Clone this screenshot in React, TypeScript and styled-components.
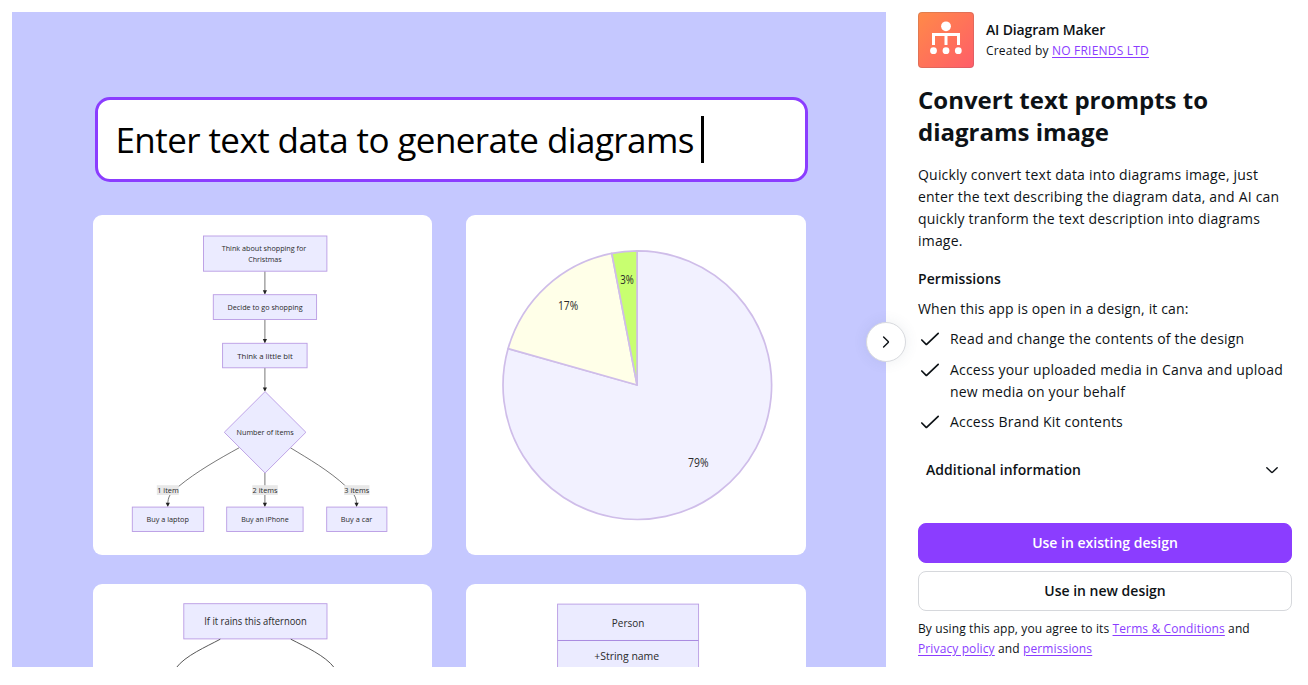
import React from "react";
import styled, { createGlobalStyle } from "styled-components";

const GlobalStyle = createGlobalStyle`
  *, *::before, *::after { box-sizing: border-box; }
  body {
    margin: 0;
    background: #fff;
    color: #0d1216;
    font-family: "Open Sans", "Noto Sans", sans-serif;
    -webkit-font-smoothing: antialiased;
  }
  h1, h2, p, ul { margin: 0; padding: 0; font-weight: inherit; }
`;

const Page = styled.main`
  display: flex;
  gap: 32px;
  height: 685px;
  padding: 12px 16px 18px 12px;
  overflow: hidden;
`;

const Preview = styled.section`
  position: relative;
  flex: 0 0 874px;
  min-width: 0;
  height: 655px;
  background: #c5c8ff;
`;

const Artwork = styled.div`
  height: 100%;
  padding: 85px 0 0 80.7px;
  overflow: hidden;
`;

const Prompt = styled.div`
  display: flex;
  align-items: center;
  height: 85px;
  width: 713px;
  margin-left: 2.3px;
  padding-left: 17.5px;
  border: 3px solid #8b3dff;
  border-radius: 15px;
  background: #fff;
  color: #000;
  font-size: 35px;
  letter-spacing: -0.58px;
  line-height: 48px;
  white-space: nowrap;
`;

const Caret = styled.span`
  width: 3px;
  height: 47px;
  margin-left: 7px;
  background: #000;
`;

const Gallery = styled.div`
  display: grid;
  grid-template-columns: repeat(2, 339.7px);
  grid-auto-rows: 339.7px;
  gap: 29.3px 33.8px;
  margin-top: 33.3px;
`;

const Card = styled.div`
  border-radius: 9px;
  background: #fff;
  overflow: hidden;

  svg { display: block; width: 100%; height: 100%; }
`;

const NextButton = styled.button`
  position: absolute;
  top: 310px;
  right: -20px;
  display: grid;
  place-items: center;
  width: 40px;
  height: 40px;
  padding: 0;
  border: 1px solid #d8dade;
  border-radius: 50%;
  background: #fff;
  box-shadow: 0 0 14px rgba(64, 87, 109, 0.1);
`;

const Details = styled.aside`
  display: flex;
  flex: none;
  flex-direction: column;
  width: 374px;
  height: 647px;
`;

const AppHeader = styled.header`
  display: flex;
  align-items: center;
  gap: 12px;
  height: 56px;
`;

const AppIcon = styled.div`
  width: 56px;
  height: 56px;
  border-radius: 4px;
  border: 1px solid rgba(57, 76, 96, 0.15);
  background: linear-gradient(135deg, #ff8a48, #ff5d69) border-box;

  svg { display: block; width: 54px; height: 54px; }
`;

const AppName = styled.p`
  margin-top: -1px;
  padding-bottom: 1px;
  font-size: 14px;
  font-weight: 600;
  line-height: 22px;
  letter-spacing: -0.15px;
`;

const Small = styled.p<{ $lead: number; $tracking: number }>`
  font-size: 12px;
  line-height: ${(p) => p.$lead}px;
  letter-spacing: ${(p) => p.$tracking}px;
`;

const Link = styled.a`
  color: #8b3dff;
  text-decoration: underline;
  text-underline-offset: 2px;
`;

const Title = styled.h1`
  margin-top: 16px;
  font-size: 24px;
  font-weight: 700;
  line-height: 32px;
`;

const Body = styled.p`
  font-size: 14px;
  line-height: 22px;
  letter-spacing: 0.2px;
`;

const Description = styled(Body)`
  margin-top: 16px;
`;

const Intro = styled(Body)`
  letter-spacing: 0.14px;
`;

const Subheading = styled.h2`
  margin: 16px 0 8px;
  font-size: 14px;
  font-weight: 600;
  line-height: 22px;
  letter-spacing: 0.1px;
`;

const PermissionList = styled.ul`
  display: flex;
  flex-direction: column;
  gap: 8.5px;
  margin-top: 8px;
  list-style: none;
`;

const Permission = styled.li`
  display: flex;
  gap: 8px;

  svg { flex: none; width: 24px; height: 24px; margin: -1px 0; }
`;

const Accordion = styled.button`
  display: flex;
  align-items: center;
  justify-content: space-between;
  height: 40px;
  margin-top: 17px;
  padding: 0 12px 0 8px;
  border: 0;
  background: none;
  color: inherit;
  font: 600 14px/22px "Open Sans", sans-serif;
  letter-spacing: 0.05px;
`;

const Footer = styled.footer`
  display: flex;
  flex-direction: column;
  gap: 8px;
  margin-top: auto;
`;

const ActionButton = styled.button<{ $primary?: boolean }>`
  height: 40px;
  border: 1px solid ${(p) => (p.$primary ? "#8b3dff" : "#d6d8dc")};
  border-radius: 8px;
  background: ${(p) => (p.$primary ? "#8b3dff" : "#fff")};
  color: ${(p) => (p.$primary ? "#fff" : "#0d1216")};
  font: 600 14px/22px "Open Sans", sans-serif;
  letter-spacing: 0;
`;

const Check = () => (
  <svg viewBox="0 0 24 24" fill="none" stroke="#0d1216" strokeWidth="1.7" strokeLinecap="round" strokeLinejoin="round">
    <path d="m3.800 13 4.100 4.100c.3.300.7.300 1 0L20.200 6.300" />
  </svg>
);

type LabelProps = { x: number; y: number; w: number; size?: number; children: string };

const Label = ({ x, y, w, size = 7.9, children }: LabelProps) => (
  <text x={x - w / 2} y={y} textLength={w} lengthAdjust="spacingAndGlyphs" fontSize={size} fill="#2a2a2a">
    {children}
  </text>
);

type NodeProps = { x: number; y: number; w: number; h: number };

const Node = (p: NodeProps) => (
  <rect x={p.x} y={p.y} width={p.w} height={p.h} fill="#ebebff" stroke="#b99be4" strokeWidth="0.9" />
);

const Arrow = ({ x, y }: { x: number; y: number }) => (
  <path d={`M${x - 2.1} ${y - 4}h4.2l-2.1 4.2z`} fill="#222" />
);

const ShoppingFlow = () => (
  <svg viewBox="92.7 215.3 339.7 339.7">
    <g fill="none" stroke="#555" strokeWidth="0.8">
      <path d="M264.600 271.500V294M264.600 319.500V343M264.600 368V391M264.600 473V506" />
      <path d="M239 448C219 459 196 472 178 487C170 493 167.500 497 167.500 505" />
      <path d="M290 448C308 459 329 471 346 487C353 493 356.300 497 356.300 505" />
    </g>
    <Arrow x={264.6} y={294.6} />
    <Arrow x={264.6} y={343.3} />
    <Arrow x={264.6} y={391.7} />
    <Arrow x={167.5} y={507} />
    <Arrow x={264.6} y={507} />
    <Arrow x={356.3} y={507} />
    <Node x={203.2} y={236.3} w={123.4} h={35.2} />
    <Node x={213} y={295} w={103.3} h={24.8} />
    <Node x={222.3} y={343.6} w={84.5} h={24.5} />
    <Node x={132} y={507.4} w={71.4} h={24.4} />
    <Node x={226.4} y={507.4} w={76.4} h={24.4} />
    <Node x={326.4} y={507.4} w={60.2} h={24.4} />
    <path d="M264.800 391.900l40.800 40.700-40.800 40.700-40.800-40.700z" fill="#ebebff" stroke="#b99be4" strokeWidth="0.9" />
    <g fill="#e8e8e8">
      <rect x="156.500" y="485.500" width="22" height="9.800" />
      <rect x="252" y="485.500" width="25.500" height="9.800" />
      <rect x="343.900" y="485.500" width="25.300" height="9.800" />
    </g>
    <Label x={263.7} y={251.8} w={84.5}>Think about shopping for</Label>
    <Label x={264.7} y={262.8} w={33.5}>Christmas</Label>
    <Label x={264.8} y={310.7} w={75}>Decide to go shopping</Label>
    <Label x={264.8} y={359} w={55.5}>Think a little bit</Label>
    <Label x={264.8} y={435.7} w={57}>Number of items</Label>
    <Label x={167.7} y={493.2} w={21.5}>1 item</Label>
    <Label x={264.8} y={493.2} w={25}>2 items</Label>
    <Label x={356.5} y={493.2} w={25}>3 items</Label>
    <Label x={167.4} y={522.7} w={42.5}>Buy a laptop</Label>
    <Label x={264.6} y={522.7} w={47.5}>Buy an iPhone</Label>
    <Label x={356.3} y={522.7} w={31.5}>Buy a car</Label>
  </svg>
);

const PieChart = () => (
  <svg viewBox="466.2 215.3 339.7 339.7">
    <g stroke="#cfbde9" strokeWidth="1.7" strokeLinejoin="round">
      <path d="M637.300 385.300V251.200A134.300 134.300 0 1 1 508.300 348.900Z" fill="#f2f1ff" />
      <path d="M637.300 385.300 508.300 348.900A134.300 134.300 0 0 1 612 253.700Z" fill="#ffffe8" />
      <path d="M637.300 385.300 612 253.700A134.300 134.300 0 0 1 637.300 251.200Z" fill="#c8ff70" />
    </g>
    <Label x={698.5} y={467} w={20.5} size={12}>79%</Label>
    <Label x={568.3} y={310.7} w={20.2} size={12}>17%</Label>
    <Label x={627.3} y={284.3} w={13.6} size={12}>3%</Label>
  </svg>
);

const RainFlow = () => (
  <svg viewBox="92.7 584.3 339.7 339.7">
    <Node x={183.5} y={604} w={143.2} h={35.2} />
    <g fill="none" stroke="#444" strokeWidth="0.9">
      <path d="M220 639.500C206 647 185 656 176 668" />
      <path d="M290.500 639.500C305 647 325 656 334 668" />
    </g>
    <Label x={255.2} y={625.7} w={102.5} size={10.6}>If it rains this afternoon</Label>
  </svg>
);

const PersonClass = () => (
  <svg viewBox="466.2 584.3 339.7 339.7">
    <Node x={557.8} y={604.4} w={141} h={120} />
    <path d="M557.800 640.800h141" stroke="#a98ae0" strokeWidth="1" />
    <Label x={628.3} y={627.5} w={32.5} size={11}>Person</Label>
    <Label x={626.9} y={660.7} w={65} size={11}>+String name</Label>
  </svg>
);

const DiagramLogo = () => (
  <svg viewBox="1 1 54 54" fill="#fff">
    <circle cx="28" cy="14.300" r="4.900" />
    <path d="M14 21h28v12h-3v-9h-9.500v9h-3v-9h-9.500v9h-3z" />
    <circle cx="15.500" cy="38.700" r="3.400" />
    <circle cx="28" cy="38.700" r="3.400" />
    <circle cx="40.300" cy="38.700" r="3.400" />
  </svg>
);

const permissions = [
  "Read and change the contents of the design",
  "Access your uploaded media in Canva and upload new media on your behalf",
  "Access Brand Kit contents",
];

export default function App() {
  return (
    <>
      <GlobalStyle />
      <Page>
        <Preview>
          <Artwork>
            <Prompt>
              Enter text data to generate diagrams
              <Caret />
            </Prompt>
            <Gallery>
              <Card><ShoppingFlow /></Card>
              <Card><PieChart /></Card>
              <Card><RainFlow /></Card>
              <Card><PersonClass /></Card>
            </Gallery>
          </Artwork>
          <NextButton aria-label="Next">
            <svg width="16" height="16" viewBox="0 0 16 16" fill="none" stroke="#0d1216" strokeWidth="1.4" strokeLinecap="round" strokeLinejoin="round">
              <path d="m5.600 3 4.600 4.500c.3.300.3.700 0 1L5.600 13" />
            </svg>
          </NextButton>
        </Preview>
        <Details>
          <AppHeader>
            <AppIcon><DiagramLogo /></AppIcon>
            <div>
              <AppName>AI Diagram Maker</AppName>
              <Small $lead={18} $tracking={0.2}>Created by <Link>NO FRIENDS LTD</Link></Small>
            </div>
          </AppHeader>
          <Title>Convert text prompts to diagrams image</Title>
          <Description>
            Quickly convert text data into diagrams image, just enter the text describing the diagram data, and AI can quickly tranform the text description into diagrams image.
          </Description>
          <Subheading>Permissions</Subheading>
          <Intro>When this app is open in a design, it can:</Intro>
          <PermissionList>
            {permissions.map((text) => (
              <Permission key={text}>
                <Check />
                <Body>{text}</Body>
              </Permission>
            ))}
          </PermissionList>
          <Accordion>
            Additional information
            <svg width="16" height="16" viewBox="0 0 16 16" fill="none" stroke="#0d1216" strokeWidth="1.4" strokeLinecap="round" strokeLinejoin="round">
              <path d="m2.800 5.700 4.700 4.600c.3.300.7.300 1 0l4.700-4.600" />
            </svg>
          </Accordion>
          <Footer>
            <ActionButton $primary>Use in existing design</ActionButton>
            <ActionButton>Use in new design</ActionButton>
            <Small $lead={20} $tracking={0.12}>
              By using this app, you agree to its <Link>Terms &amp; Conditions</Link> and <Link>Privacy policy</Link> and <Link>permissions</Link>
            </Small>
          </Footer>
        </Details>
      </Page>
    </>
  );
}
